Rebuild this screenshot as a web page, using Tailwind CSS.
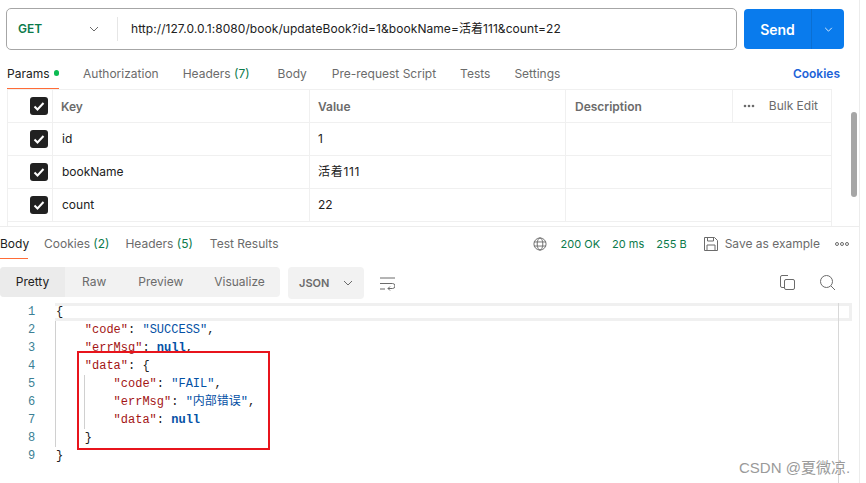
<!DOCTYPE html>
<html lang="en">
<head>
    <meta charset="UTF-8">
    <title>Postman</title>
    <script src="https://cdn.jsdelivr.net/npm/@tailwindcss/browser@4"></script>
</head>
<body class="bg-white overflow-hidden font-['Inter','Noto_Sans_CJK_SC',sans-serif] text-[12px] text-[#6b6b6b]">
<div class="relative w-[866px] h-[483px] overflow-hidden">
    <!-- Request bar -->
    <div class="flex pl-[6px] pt-[8px] h-[58px]">
        <div class="flex items-center w-[731px] h-[42px] border border-[#a6a6a6] rounded-[5px]">
            <span class="w-[82px] pl-[11px] font-semibold text-[#0b7a4b]">GET</span>
            <svg class="w-[10px] h-[6px]" viewBox="0 0 10 6" fill="none" stroke="#6b6b6b"><path d="M1 1l4 4 4-4"/></svg>
            <span class="ml-[18px] h-[24px] border-l border-[#e6e6e6]"></span>
            <span class="ml-[13px] tracking-[0.06px] text-[#212121]">http://127.0.0.1:8080/book/updateBook?id=1&amp;bookName=活着111&amp;count=22</span>
        </div>
        <div class="flex ml-[7px] mt-[1px] w-[100px] h-[40px] bg-[#097bed] rounded-[4px] text-white">
            <span class="flex items-center justify-center w-[68px] text-[14px] font-semibold border-r border-[#0a6fd3]">Send</span>
            <span class="flex items-center justify-center flex-1">
                <svg class="w-[9px] h-[5px]" viewBox="0 0 10 6" fill="none" stroke="#fff"><path d="M1 1l4 4 4-4"/></svg>
            </span>
        </div>
    </div>

    <!-- Request tabs -->
    <div class="flex items-start h-[31px] pl-[7px] w-[840px] pt-[7px]">
        <div class="w-[52px] h-[24px] border-b border-[#ff6c37] text-[#212121] flex items-start">Params<span class="ml-[4px] mt-[5px] w-[6px] h-[6px] rounded-full bg-[#0cbb52]"></span></div>
        <span class="ml-[24px]">Authorization</span>
        <span class="ml-[24px]">Headers <span class="text-[#0b7a4b]">(7)</span></span>
        <span class="ml-[28px]">Body</span>
        <span class="ml-[25px]">Pre-request Script</span>
        <span class="ml-[24px]">Tests</span>
        <span class="ml-[24px]">Settings</span>
        <span class="ml-auto font-semibold text-[#1d63d8]">Cookies</span>
    </div>

    <!-- Params table -->
    <div class="ml-[7px] w-[825px] h-[137px] border-x border-[#f0f0f0]">
        <div class="grid grid-cols-[45px_257px_256px_1fr] h-[34px] border-y border-[#f0f0f0] font-semibold text-[#6b6b6b]">
            <div class="flex items-center justify-center border-r border-[#f0f0f0] pl-[17px]">
                <svg class="w-[18px] h-[18px] shrink-0" viewBox="0 0 18 18"><rect width="18" height="18" rx="3" fill="#212121"/><path d="M4.5 9.5l3 3 6-6.5" fill="none" stroke="#fff" stroke-width="2"/></svg>
            </div>
            <div class="flex items-center pl-[8px] pt-[1px] border-r border-[#f0f0f0]">Key</div>
            <div class="flex items-center pl-[8px] pt-[1px] border-r border-[#f0f0f0]">Value</div>
            <div class="flex items-center pl-[9px]"><span class="pt-[1px]">Description</span>
                <span class="ml-auto flex items-center h-full font-normal pr-[13px] border-l border-[#f0f0f0] pl-[10px]">
                    <svg class="w-[12px] h-[4px]" viewBox="0 0 12 4" fill="#6b6b6b"><circle cx="2" cy="2" r="1.3"/><circle cx="6" cy="2" r="1.3"/><circle cx="10" cy="2" r="1.3"/></svg>
                    <span class="ml-[14px]">Bulk Edit</span>
                </span>
            </div>
        </div>
        <div class="grid grid-cols-[45px_257px_256px_1fr] h-[33px] border-b border-[#f0f0f0] text-[#212121]">
            <div class="flex items-center justify-center border-r border-[#f0f0f0] pl-[17px]">
                <svg class="w-[18px] h-[18px] shrink-0" viewBox="0 0 18 18"><rect width="18" height="18" rx="3" fill="#212121"/><path d="M4.5 9.5l3 3 6-6.5" fill="none" stroke="#fff" stroke-width="2"/></svg>
            </div>
            <div class="flex items-center pl-[9px] border-r border-[#f0f0f0]">id</div>
            <div class="flex items-center pl-[8px] border-r border-[#f0f0f0]">1</div>
            <div></div>
        </div>
        <div class="grid grid-cols-[45px_257px_256px_1fr] h-[33px] border-b border-[#f0f0f0] text-[#212121]">
            <div class="flex items-center justify-center border-r border-[#f0f0f0] pl-[17px]">
                <svg class="w-[18px] h-[18px] shrink-0" viewBox="0 0 18 18"><rect width="18" height="18" rx="3" fill="#212121"/><path d="M4.5 9.5l3 3 6-6.5" fill="none" stroke="#fff" stroke-width="2"/></svg>
            </div>
            <div class="flex items-center pl-[9px] border-r border-[#f0f0f0]">bookName</div>
            <div class="flex items-center pl-[8px] border-r border-[#f0f0f0]"><span class="tracking-[0.7px]">活着111</span></div>
            <div></div>
        </div>
        <div class="grid grid-cols-[45px_257px_256px_1fr] h-[33px] border-b border-[#f0f0f0] text-[#212121]">
            <div class="flex items-center justify-center border-r border-[#f0f0f0] pl-[17px]">
                <svg class="w-[18px] h-[18px] shrink-0" viewBox="0 0 18 18"><rect width="18" height="18" rx="3" fill="#212121"/><path d="M4.5 9.5l3 3 6-6.5" fill="none" stroke="#fff" stroke-width="2"/></svg>
            </div>
            <div class="flex items-center pl-[9px] border-r border-[#f0f0f0]">count</div>
            <div class="flex items-center pl-[8px] border-r border-[#f0f0f0]">22</div>
            <div></div>
        </div>
    </div>

    <!-- Response tabs -->
    <div class="flex items-start h-[33px] border-t border-[#ededed] pt-[8px] w-[860px]">
        <div class="w-[28px] h-[24px] border-b border-[#ff6c37] text-[#212121]">Body</div>
        <span class="ml-[16px]">Cookies <span class="text-[#0b7a4b]">(2)</span></span>
        <span class="ml-[16px]">Headers <span class="text-[#0b7a4b]">(5)</span></span>
        <span class="ml-[17px]">Test Results</span>
        <div class="ml-auto flex items-center pr-[11px] h-[18px]">
            <svg class="w-[14px] h-[14px]" viewBox="0 0 15 15" fill="none" stroke="#6b6b6b"><circle cx="7.5" cy="7.5" r="6.5"/><ellipse cx="7.5" cy="7.5" rx="3" ry="6.5"/><path d="M1 5.3h13M1 9.700h13"/></svg>
            <span class="ml-[14px] text-[11px] text-[#0b7a4b]">200 OK</span>
            <span class="ml-[12px] text-[11px] text-[#0b7a4b]">20 ms</span>
            <span class="ml-[12px] text-[11px] text-[#0b7a4b]">255 B</span>
            <svg class="ml-[17px] w-[14px] h-[14px]" viewBox="0 0 14 14" fill="none" stroke="#6b6b6b"><path d="M.5.5h10l3 3v10H.5zM3.500.5v3.500h6V.5M3 13.500V8h8v5.500"/></svg>
            <span class="ml-[7px]">Save as example</span>
            <svg class="ml-[15px] w-[14px] h-[6px]" viewBox="0 0 14 6" fill="none" stroke="#6b6b6b"><circle cx="2" cy="3" r="1.500"/><circle cx="7" cy="3" r="1.500"/><circle cx="12" cy="3" r="1.500"/></svg>
        </div>
    </div>

    <!-- Response toolbar -->
    <div class="flex items-start h-[44px] pt-[8px] w-[860px]">
        <div class="flex items-center w-[280px] h-[30px] bg-[#f2f2f2] rounded-[4px]">
            <span class="flex items-center justify-center w-[65px] h-full bg-[#ebebeb] rounded-l-[4px] text-[#212121]">Pretty</span>
            <span class="ml-[17px]">Raw</span>
            <span class="ml-[32px]">Preview</span>
            <span class="ml-[31px]">Visualize</span>
        </div>
        <div class="flex items-center ml-[8px] w-[76px] h-[32px] bg-[#f2f2f2] rounded-[4px] pl-[11px] text-[11px] font-semibold">
            JSON
            <svg class="ml-[14px] w-[10px] h-[6px]" viewBox="0 0 10 6" fill="none" stroke="#6b6b6b"><path d="M1 1l4 4 4-4"/></svg>
        </div>
        <svg class="ml-[16px] mt-[10px] w-[15px] h-[14px]" viewBox="0 0 15 14" fill="none" stroke="#6b6b6b"><path d="M0 1h15M0 6.500h12.500a2 2 0 0 1 0 5H8M0 12h5M10 9.500l-2 2 2 2"/></svg>
        <svg class="ml-auto mt-[8px] w-[15px] h-[15px]" viewBox="0 0 15 15" fill="none" stroke="#6b6b6b"><path d="M4.500 12.500H2a1.500 1.500 0 0 1-1.500-1.500V2A1.500 1.500 0 0 1 2 .5h6"/><rect x="4.500" y="4.500" width="10" height="10" rx="1.500"/></svg>
        <svg class="ml-[25px] mr-[25px] mt-[8px] w-[15px] h-[15px]" viewBox="0 0 15 15" fill="none" stroke="#6b6b6b"><circle cx="6.500" cy="6.500" r="6"/><path d="M11 11l4 4"/></svg>
    </div>

    <!-- Response body -->
    <div class="flex font-['Liberation_Mono','Noto_Sans_CJK_SC',monospace] text-[12px] leading-[18px] h-[160px] w-[859px] text-[#212121]">
        <div class="w-[55px] pl-[28px] text-[#3b7f95]">
            <div>1</div><div>2</div><div>3</div><div>4</div><div>5</div><div>6</div><div>7</div><div>8</div><div>9</div>
        </div>
        <div class="flex-1">
            <div class="w-[797px] h-[18px] leading-[12px] border-y-[3px] border-r-[3px] border-[#f0f0f0] pl-[1px]">{</div>
            <div class="border-l border-[#d0d0d0] h-[126px]">
                <div class="whitespace-pre">    <span class="text-[#a31515]">"code"</span>: <span class="text-[#0451a5]">"SUCCESS"</span>,</div>
                <div class="whitespace-pre">    <span class="text-[#a31515]">"errMsg"</span>: <span class="text-[#0451a5] font-bold">null</span>,</div>
                <div class="whitespace-pre">    <span class="text-[#a31515]">"data"</span>: {</div>
                <div class="whitespace-pre">        <span class="text-[#a31515]">"code"</span>: <span class="text-[#0451a5]">"FAIL"</span>,</div>
                <div class="whitespace-pre">        <span class="text-[#a31515]">"errMsg"</span>: <span class="text-[#0451a5]">"内部错误"</span>,</div>
                <div class="whitespace-pre">        <span class="text-[#a31515]">"data"</span>: <span class="text-[#0451a5] font-bold">null</span></div>
                <div class="whitespace-pre">    }</div>
            </div>
            <div class="pl-[1px]">}</div>
        </div>
    </div>

    <!-- Overlays: page scrollbar, divider lines, annotation box, watermark -->
    <div class="absolute left-[859px] top-0 w-px h-full bg-[#ececec]"></div>
    <div class="absolute left-[851px] top-[112px] w-[6px] h-[85px] rounded-[3px] bg-[#a6a6a6]"></div>
    <div class="absolute left-[838px] top-[303px] w-px h-[180px] bg-[#d8d8d8]"></div>
    <div class="absolute left-[84px] top-[375px] w-px h-[54px] bg-[#d0d0d0]"></div>
    <div class="absolute left-[77px] top-[351px] w-[193px] h-[99px] border-2 border-[#e8141c]"></div>
    <div class="absolute left-[739px] top-[457px] text-[15px] text-[#9a9a9a] font-['Liberation_Sans','Noto_Sans_CJK_SC',sans-serif]">CSDN @夏微凉.</div>
</div>
</body>
</html>
